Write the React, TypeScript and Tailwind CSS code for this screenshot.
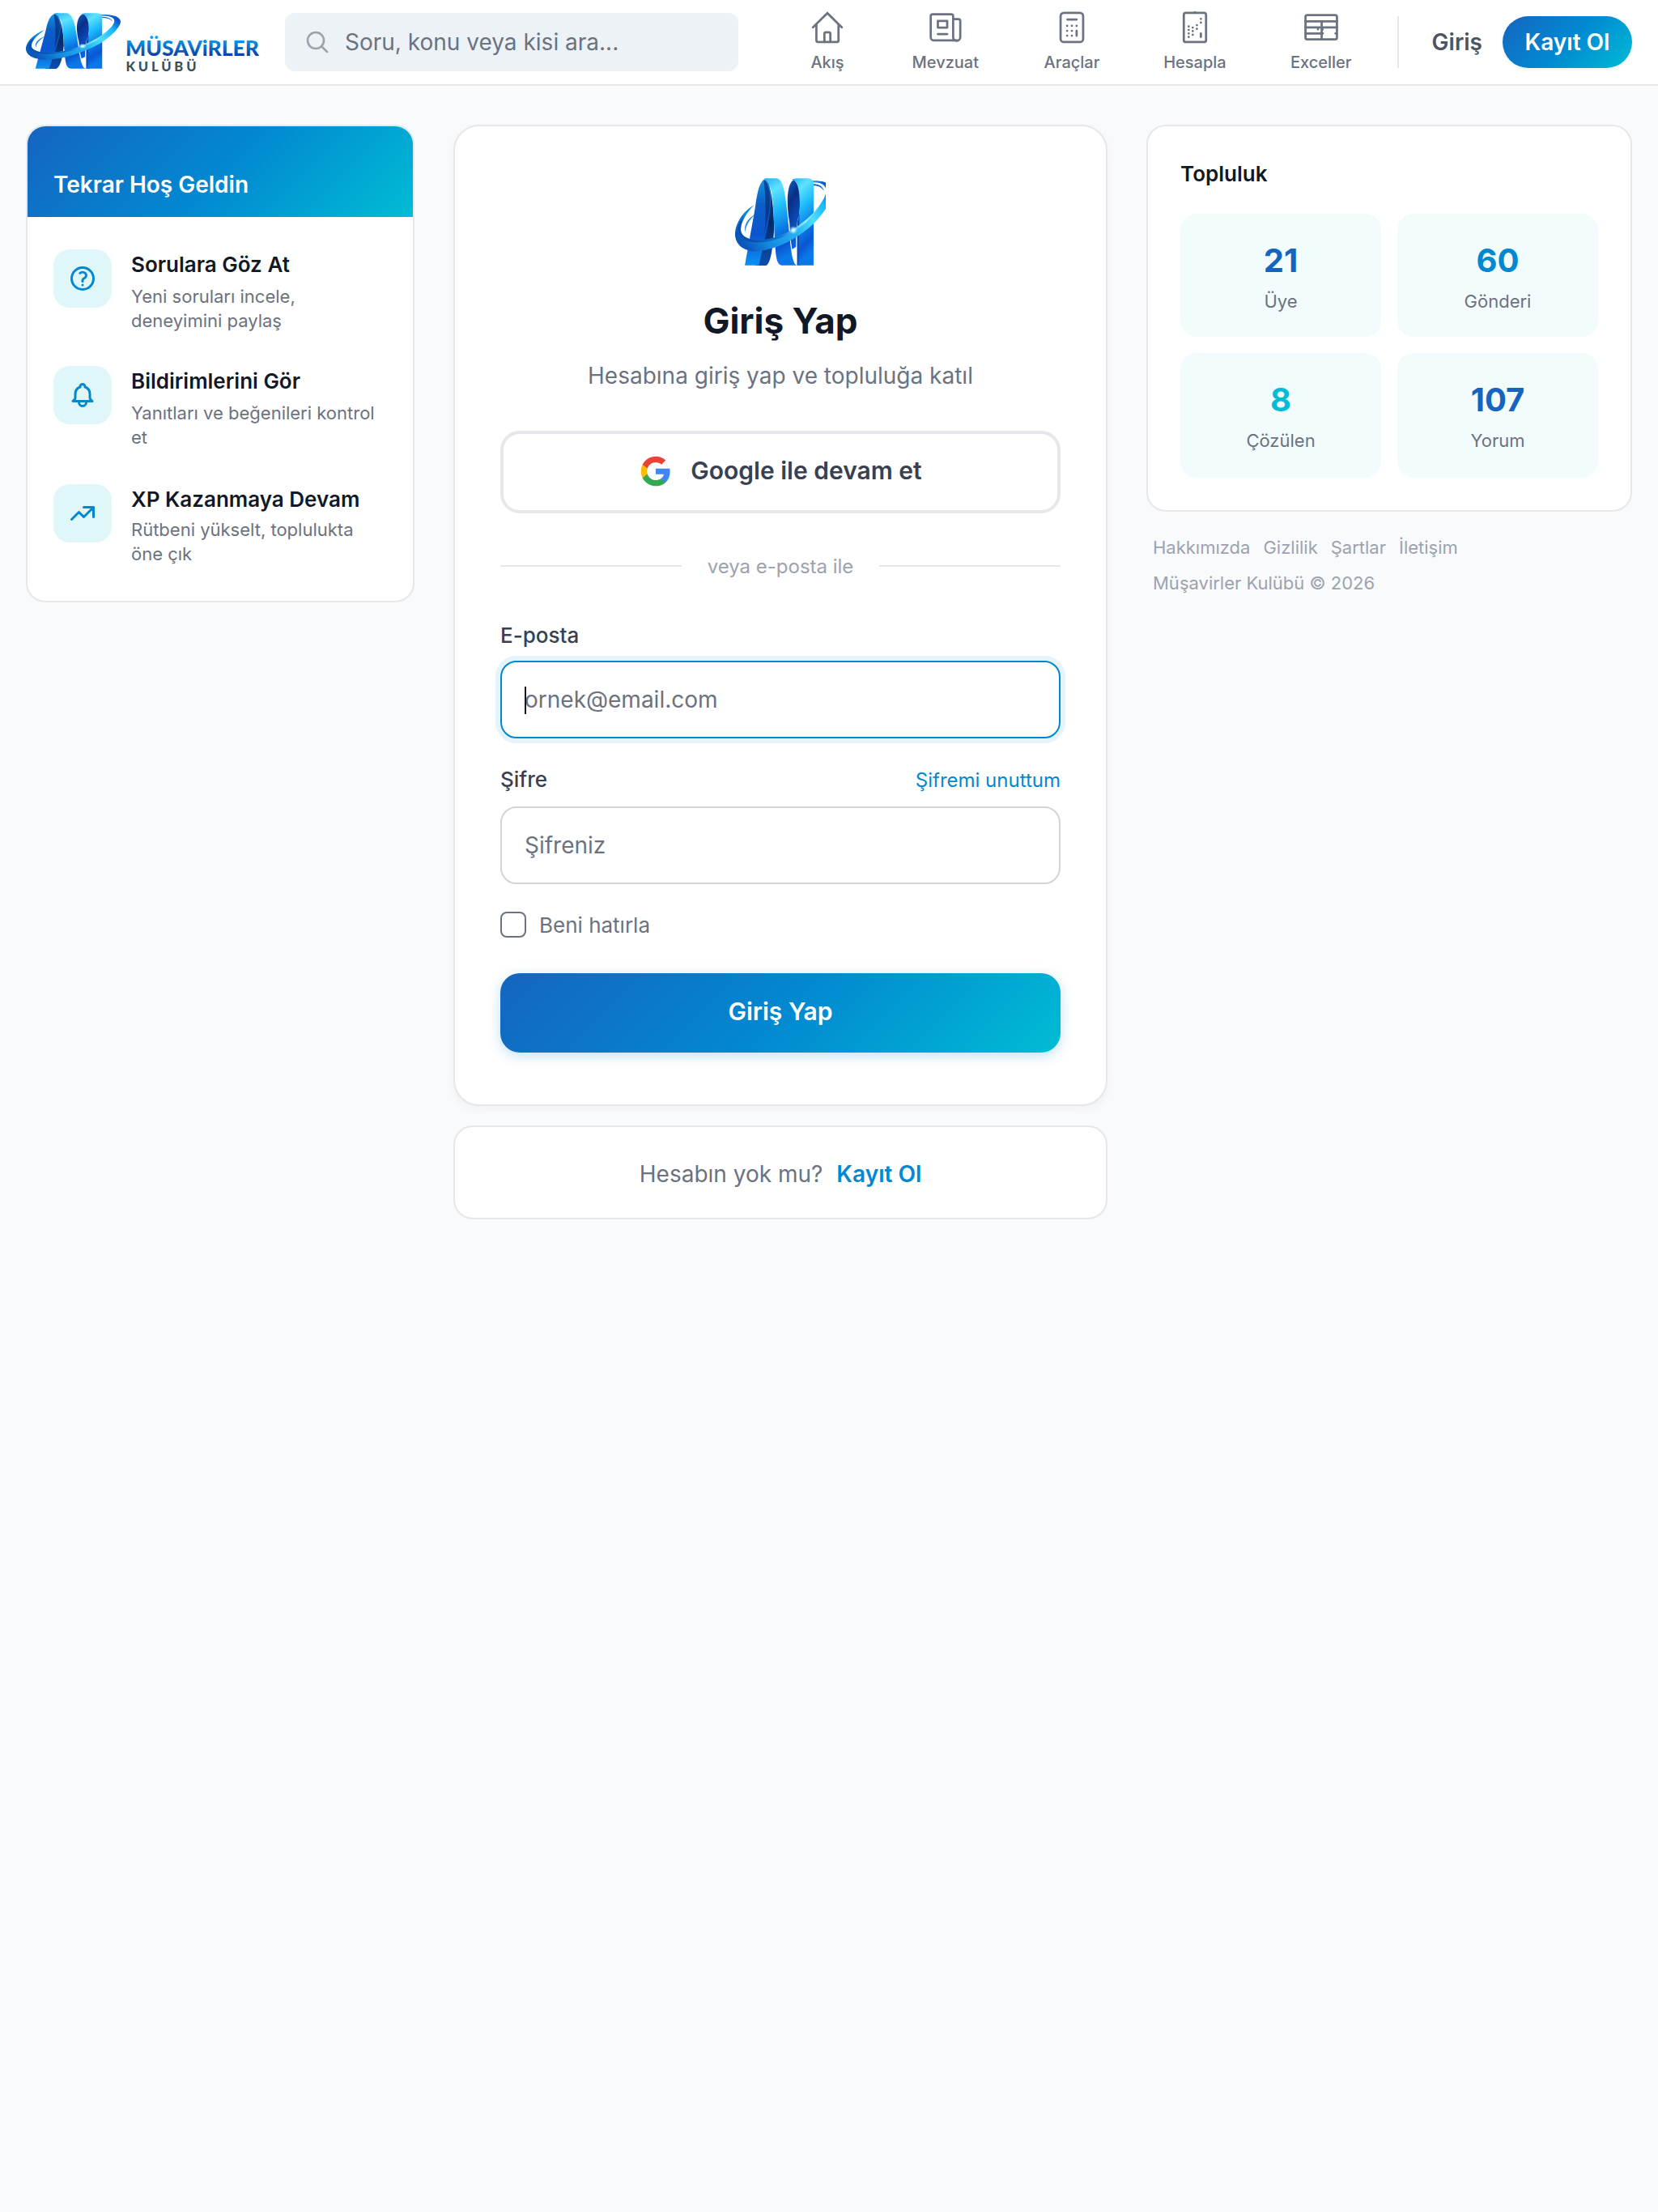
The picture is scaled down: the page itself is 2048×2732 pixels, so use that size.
import type { ReactNode } from 'react';

const NAV = [
  { label: 'Akış', icon: 'home', cell: 'w-[124px]' },
  { label: 'Mevzuat', icon: 'news', cell: 'w-[167.6px]' },
  { label: 'Araçlar', icon: 'calc', cell: 'w-[144.8px]' },
  { label: 'Hesapla', icon: 'sheet', cell: 'w-[159px]' },
  { label: 'Exceller', icon: 'table', cell: 'w-[152.6px]' },
];

const FEATURES = [
  {
    title: 'Sorulara Göz At',
    body: 'Yeni soruları incele, deneyimini paylaş',
    icon: 'question',
    row: 'h-[104px]',
    gap: 'mt-[5px]',
  },
  {
    title: 'Bildirimlerini Gör',
    body: 'Yanıtları ve beğenileri kontrol et',
    icon: 'bell',
    row: 'h-[106px]',
    gap: 'mt-[5px]',
  },
  {
    title: 'XP Kazanmaya Devam',
    body: 'Rütbeni yükselt, toplulukta öne çık',
    icon: 'trend',
    row: 'h-[104px]',
    gap: 'mt-[3px]',
  },
];

const STATS = [
  { value: '21', label: 'Üye', color: 'text-[#1565c0]' },
  { value: '60', label: 'Gönderi', color: 'text-[#0288d1]' },
  { value: '8', label: 'Çözülen', color: 'text-[#00bcd4]' },
  { value: '107', label: 'Yorum', color: 'text-[#1565c0]' },
];

const LINKS = ['Hakkımızda', 'Gizlilik', 'Şartlar', 'İletişim'];

const ICONS: Record<string, ReactNode> = {
  search: (
    <path d="m21 21-5.197-5.197m0 0A7.5 7.5 0 1 0 5.196 5.196a7.5 7.5 0 0 0 10.607 10.607Z" />
  ),
  home: (
    <>
      <path
        strokeLinejoin="miter"
        d="M2.3 11.9 12 2.3l9.7 9.6"
      />
      <path d="M4.6 10v10.6c0 .7.5 1.2 1.1 1.2h12.7c.6 0 1.1-.5 1.1-1.2V10" />
      <path d="M10 21.7v-5.4c0-.7.4-1.1 1-1.1h2c.6 0 1 .4 1 1.1v5.4" />
    </>
  ),
  news: (
    <>
      <path d="M17.1 20.7H4.2A2.2 2.2 0 0 1 2 18.5V4.3C2 3.5 2.6 3 3.3 3h12.5c.7 0 1.3.5 1.3 1.3v14.2a2.2 2.2 0 0 0 4.8 0V7.7c0-.8-.5-1.3-1.2-1.3h-3.6" />
      <path d="M17.1 20.7h2.6" />
      <path d="M6.8 7.5h6.3V12H6.8zM6.8 16.4h6.3" />
    </>
  ),
  calc: (
    <>
      <rect x="4.4" y="2.1" width="15.2" height="19.7" rx="2.2" />
      <path d="M9 6.6h6.2M8.8 10.9h.01M12 10.9h.01M15.2 10.9h.01M8.8 14.2h.01M12 14.2h.01M8.8 17.5h.01M12 17.5h.01M15.2 14.2v3.3" />
    </>
  ),
  sheet: (
    <>
      <rect x="4.5" y="2.1" width="15" height="19.7" rx="1.4" />
      <path d="M12 1.7h.01M7.8 11.3h.01M7.8 13.6h.01M7.8 16h.01M7.8 18.4h.01M10.5 12h.01M10.5 14.4h.01M10.5 16.9h.01M13.3 10.4h.01M13.3 12.9h.01M16 6.2h.01M16 8.7h.01M16 16v2.3" />
    </>
  ),
  table: (
    <>
      <rect x="1.4" y="3.6" width="21.2" height="16.4" rx="1.2" />
      <path d="M1.4 7.8h21.2M1.4 11.9h21.2M1.4 16H12.3M12.3 7.8V20M9.8 13.2h.01M12.9 13.3h.01M13.1 16h.01M21.6 16h.01" />
    </>
  ),
  question: (
    <path d="M9.879 7.519c1.171-1.025 3.071-1.025 4.242 0 1.172 1.025 1.172 2.687 0 3.712-.203.179-.43.326-.67.442-.745.361-1.45.999-1.45 1.827v.75M21 12a9 9 0 1 1-18 0 9 9 0 0 1 18 0Zm-9 5.25h.008v.008H12v-.008Z" />
  ),
  bell: (
    <path d="M15 17h5l-1.405-1.405A2.032 2.032 0 0 1 18 14.158V11a6.002 6.002 0 0 0-4-5.659V5a2 2 0 1 0-4 0v.341C7.67 6.165 6 8.388 6 11v3.159c0 .538-.214 1.055-.595 1.436L4 17h5m6 0v1a3 3 0 1 1-6 0v-1m6 0H9" />
  ),
  trend: <path d="M13 7h8m0 0v8m0-8-8 8-4-4-6 6" />,
};

function Icon({
  name,
  className,
  strokeWidth = 1.5,
}: {
  name: string;
  className: string;
  strokeWidth?: number;
}) {
  return (
    <svg
      viewBox="0 0 24 24"
      fill="none"
      stroke="currentColor"
      strokeWidth={strokeWidth}
      strokeLinecap="round"
      strokeLinejoin="round"
      className={className}
    >
      {ICONS[name]}
    </svg>
  );
}

function LogoMark({
  id,
  viewBox,
  className,
}: {
  id: string;
  viewBox: string;
  className: string;
}) {
  const fill = (name: string) => `url(#${id}-${name})`;
  return (
    <svg viewBox={viewBox} preserveAspectRatio="none" className={className}>
      <defs>
        <linearGradient id={`${id}-leg`} x1="0" y1="0" x2="0" y2="1">
          <stop offset="0" stopColor="#1494e4" />
          <stop offset="0.3" stopColor="#0a5fc4" />
          <stop offset="0.65" stopColor="#0a55d0" />
          <stop offset="1" stopColor="#0a93f2" />
        </linearGradient>
        <linearGradient id={`${id}-back`} x1="0" y1="0" x2="0" y2="1">
          <stop offset="0" stopColor="#0b3f94" />
          <stop offset="0.5" stopColor="#062a66" />
          <stop offset="1" stopColor="#0a4fb0" />
        </linearGradient>
        <linearGradient id={`${id}-front`} x1="0" y1="0" x2="0.25" y2="1">
          <stop offset="0" stopColor="#22b0f2" />
          <stop offset="0.2" stopColor="#5fe2ff" />
          <stop offset="0.42" stopColor="#1fbcfb" />
          <stop offset="0.68" stopColor="#0b78e4" />
          <stop offset="0.86" stopColor="#0a55d2" />
          <stop offset="1" stopColor="#0a78e6" />
        </linearGradient>
        <linearGradient id={`${id}-inner`} x1="0" y1="0" x2="0.3" y2="1">
          <stop offset="0" stopColor="#0b66c8" />
          <stop offset="0.35" stopColor="#0a2f86" />
          <stop offset="1" stopColor="#0b5fe0" />
        </linearGradient>
        <linearGradient id={`${id}-ring`} x1="0" y1="0.7" x2="1" y2="0.2">
          <stop offset="0" stopColor="#0b58bc" />
          <stop offset="0.2" stopColor="#118be0" />
          <stop offset="0.5" stopColor="#25b4f6" />
          <stop offset="0.7" stopColor="#4fdcff" />
          <stop offset="0.88" stopColor="#14b6fb" />
          <stop offset="1" stopColor="#0b56cc" />
        </linearGradient>
        <linearGradient id={`${id}-edge`} x1="0" y1="0.3" x2="1" y2="0">
          <stop offset="0" stopColor="#0b50b0" />
          <stop offset="0.3" stopColor="#1278d2" />
          <stop offset="0.65" stopColor="#8ff0ff" />
          <stop offset="1" stopColor="#2cc4fb" />
        </linearGradient>
        <radialGradient id={`${id}-glow`}>
          <stop offset="0" stopColor="#ffffff" />
          <stop offset="0.35" stopColor="#d8fbff" stopOpacity="0.8" />
          <stop offset="1" stopColor="#8ff0ff" stopOpacity="0" />
        </radialGradient>
      </defs>
      {/* ribbon A */}
      <path
        d="M150 38C168 60 180 130 181 225C176 300 168 350 152 360H112L120 200Z"
        fill={fill('back')}
      />
      <path
        d="M73 359L112 140C120 80 130 36 158 36C164 60 172 100 168 140C160 220 138 300 125 359Z"
        fill={fill('leg')}
      />
      <path
        d="M143 42C160 48 170 90 164 150C158 190 152 210 146 240C152 170 150 100 143 42Z"
        fill="#0a2f7c"
        opacity="0.75"
      />
      <path
        d="M142 38C150 35 175 36 190 36C212 38 220 80 226 130C236 210 240 300 252 340C256 354 260 359 268 359H210C194 356 190 340 187 310C180 240 182 150 172 90C166 58 156 42 142 38Z"
        fill={fill('front')}
      />
      {/* ribbon I */}
      <path
        d="M238 200C226 130 226 44 262 37C276 50 280 90 277 130L274 175C264 190 262 230 262 290L248 300C242 270 240 230 238 200Z"
        fill={fill('inner')}
      />
      <path d="M266 200L280 150V359H266Z" fill="#0a4cb4" />
      <path
        d="M247 40C255 35 275 36 300 36C318 36 327 40 327 60V359H271L276 130C276 80 268 44 247 40Z"
        fill={fill('front')}
      />
      {/* orbit */}
      <path
        d="M112 168C84 186 68 208 75 236C76 210 90 190 112 168Z"
        fill="#1583dc"
      />
      <path
        d="M327 57C350 58 362 68 366 84C358 70 345 63 327 63Z"
        fill="#0d63cc"
      />
      <path
        d="M107 135C70 155 37 200 37 247C40 290 80 308 115 307C200 303 300 240 345 185C375 150 397 110 397 85C395 55 365 43 322 45L327 51C360 51 378 64 372 92C364 125 320 180 262 218C220 246 170 266 120 266C80 264 55 248 58 222C62 190 85 158 107 135Z"
        fill={fill('ring')}
      />
      <path
        d="M58 222C55 248 80 264 120 266C170 266 220 246 262 218C310 185 350 145 366 108C350 150 310 196 262 228C215 257 160 276 110 274C70 271 42 254 48 215C52 200 60 190 68 180C62 195 58 208 58 222Z"
        fill={fill('edge')}
      />
      <circle cx="252" cy="228" r="16" fill={fill('glow')} />
    </svg>
  );
}

function GoogleIcon() {
  return (
    <svg viewBox="0 0 24 24" className="size-10">
      <path
        fill="#4285F4"
        d="M22.56 12.25c0-.78-.07-1.53-.2-2.25H12v4.26h5.92c-.26 1.37-1.04 2.53-2.21 3.31v2.77h3.57c2.08-1.92 3.28-4.74 3.28-8.09z"
      />
      <path
        fill="#34A853"
        d="M12 23c2.97 0 5.46-.98 7.28-2.66l-3.57-2.77c-.98.66-2.23 1.06-3.71 1.06-2.86 0-5.29-1.93-6.16-4.53H2.18v2.84C3.99 20.53 7.7 23 12 23z"
      />
      <path
        fill="#FBBC05"
        d="M5.84 14.09c-.22-.66-.35-1.36-.35-2.09s.13-1.43.35-2.09V7.07H2.18C1.43 8.55 1 10.22 1 12s.43 3.45 1.18 4.93l2.85-2.22.81-.62z"
      />
      <path
        fill="#EA4335"
        d="M12 5.38c1.62 0 3.06.56 4.21 1.64l3.15-3.15C17.45 2.09 14.97 1 12 1 7.7 1 3.99 3.47 2.18 7.07l3.66 2.84c.87-2.6 3.3-4.53 6.16-4.53z"
      />
    </svg>
  );
}

function Header() {
  return (
    <header className="flex h-[106px] items-start border-b-2 border-[#e5e7eb] bg-white px-8">
      <a className="flex w-[320px] pt-4">
        <LogoMark
          id="brand"
          viewBox="37 35 360 325"
          className="h-[69px] w-[117px] shrink-0"
        />
        <svg viewBox="0 0 180 80" className="ml-1.5 h-20 w-[180px] shrink-0">
          <defs>
            <linearGradient
              id="word"
              gradientUnits="userSpaceOnUse"
              x1="0"
              y1="32"
              x2="0"
              y2="54"
            >
              <stop offset="0" stopColor="#0a9cf0" />
              <stop offset="1" stopColor="#0a3c9c" />
            </linearGradient>
          </defs>
          <text
            x="0"
            y="53"
            fill="url(#word)"
            textLength="165"
            className="font-['Lato'] text-[26.5px] font-black"
          >
            MÜSAViRLER
          </text>
          <text
            x="0.5"
            y="71.5"
            fill="#37505e"
            textLength="87"
            className="font-['Lato'] text-[16.5px] font-black"
          >
            KULÜBÜ
          </text>
        </svg>
      </a>

      <div className="mt-4 flex h-[72px] w-[560px] items-center gap-[18px] rounded-xl bg-[#edf2f7] px-6">
        <Icon name="search" strokeWidth={2} className="size-8 text-[#9ca3af]" />
        <span className="text-[28px] text-[#6b7280]">
          Soru, konu veya kisi ara...
        </span>
      </div>

      <nav className="ml-[48px] flex">
        {NAV.map((item) => (
          <a
            key={item.label}
            className={`${item.cell} flex flex-col items-center pt-3 text-[#6b7280]`}
          >
            <Icon name={item.icon} className="size-11" />
            <span className="mt-[7px] text-[20px] leading-7 font-medium">
              {item.label}
            </span>
          </a>
        ))}
      </nav>

      <div className="mt-5 ml-auto flex h-16 items-center">
        <div className="h-16 w-0.5 bg-[#e5e7eb]" />
        <a className="ml-[41px] text-[28px] font-semibold text-[#4b5563]">
          Giriş
        </a>
        <a className="ml-[25px] flex h-16 w-40 items-center justify-center rounded-full bg-[linear-gradient(135deg,#1565c0_0%,#0288d1_50%,#00bcd4_100%)] text-[28px] font-semibold text-white shadow-[0_2px_4px_rgba(0,0,0,0.06)]">
          Kayıt Ol
        </a>
      </div>
    </header>
  );
}

function WelcomeCard() {
  return (
    <aside className="w-[480px] overflow-hidden rounded-3xl border-2 border-[#e5e7eb] bg-white">
      <div className="flex h-28 items-end bg-[linear-gradient(135deg,#1565c0_0%,#0288d1_50%,#00bcd4_100%)] px-8 pb-5">
        <h2 className="text-[28px] leading-[40px] font-semibold text-white">
          Tekrar Hoş Geldin
        </h2>
      </div>
      <div className="flex flex-col gap-10 px-8 py-10">
        {FEATURES.map((f) => (
          <div key={f.title} className={`${f.row} flex gap-6`}>
            <div className="flex size-[72px] shrink-0 items-center justify-center rounded-[20px] bg-[#e0f7fa]">
              <Icon
                name={f.icon}
                strokeWidth={2}
                className="size-9 text-[#0288d1]"
              />
            </div>
            <div>
              <h3 className="text-[26px] leading-[38px] font-semibold text-[#111827]">
                {f.title}
              </h3>
              <p className={`${f.gap} text-[22px] leading-[30px] text-[#6b7280]`}>
                {f.body}
              </p>
            </div>
          </div>
        ))}
      </div>
    </aside>
  );
}

function LoginCard() {
  return (
    <div className="h-[1212px] rounded-[32px] border-2 border-[#e5e7eb] bg-white px-14 pt-16 shadow-[0_4px_12px_rgba(0,0,0,0.04)]">
      <div className="flex h-28 justify-center">
        <LogoMark
          id="hero"
          viewBox="37 35 335 325"
          className="h-[108px] w-28"
        />
      </div>
      <h1 className="mt-9 text-center text-[44px] leading-[56px] font-bold text-[#111827]">
        Giriş Yap
      </h1>
      <p className="mt-[19px] text-center text-[28px] leading-[42px] text-[#6b7280]">
        Hesabına giriş yap ve topluluğa katıl
      </p>

      <button className="mt-[47px] flex h-[102px] w-full items-center justify-center gap-[23px] rounded-3xl border-4 border-[#e5e7eb] bg-white pb-[3px] pl-px text-[30px] font-semibold text-[#374151]">
        <GoogleIcon />
        Google ile devam et
      </button>

      <div className="mt-[47px] flex h-9 items-center gap-8">
        <div className="h-0.5 flex-1 bg-[#e5e7eb]" />
        <span className="pt-0.5 text-[24px] leading-9 text-[#9ca3af]">
          veya e-posta ile
        </span>
        <div className="h-0.5 flex-1 bg-[#e5e7eb]" />
      </div>

      <label className="mt-12 block text-[26px] leading-10 font-medium text-[#374151]">
        E-posta
      </label>
      <div className="relative mt-[11px]">
        <input
          type="email"
          placeholder="ornek@email.com"
          className="block h-24 w-full rounded-[20px] border-2 border-[#0288d1] bg-white px-7 text-[28px] shadow-[0_0_0_6px_rgba(2,136,209,0.1)] outline-none placeholder:text-[#6b7280]"
        />
        {/* caret */}
        <span className="absolute top-8 left-[30px] h-[34px] w-0.5 bg-[#111827]" />
      </div>

      <div className="mt-[31px] flex h-10 items-baseline justify-between leading-10">
        <label className="text-[26px] font-medium text-[#374151]">Şifre</label>
        <a className="text-[24px] text-[#0288d1]">Şifremi unuttum</a>
      </div>
      <input
        type="password"
        placeholder="Şifreniz"
        className="mt-[13px] block h-24 w-full rounded-[20px] border-2 border-[#d1d5db] bg-white px-7 text-[28px] outline-none placeholder:text-[#6b7280]"
      />

      <label className="mt-[34px] flex h-8 items-center gap-4 text-[26px] text-[#6b7280]">
        <span className="size-8 rounded-lg border-2 border-[#6b7280] bg-white" />
        <span className="pt-0.5 leading-8">Beni hatırla</span>
      </label>

      <button className="mt-11 flex h-[98px] w-full items-center justify-center rounded-3xl bg-[linear-gradient(135deg,#1565c0_0%,#0288d1_50%,#00bcd4_100%)] pb-[3px] text-[30px] font-semibold text-white shadow-[0_4px_16px_rgba(2,136,209,0.25)]">
        Giriş Yap
      </button>
    </div>
  );
}

function Community() {
  return (
    <aside className="w-[600px]">
      <div className="rounded-3xl border-2 border-[#e5e7eb] bg-white px-10 pt-[39px] pb-10">
        <h2 className="text-[26px] leading-[39px] font-semibold text-[#111827]">
          Topluluk
        </h2>
        <div className="mt-[30px] grid grid-cols-2 grid-rows-[152px_154px] gap-5">
          {STATS.map((s) => (
            <div
              key={s.label}
              className="flex flex-col items-center rounded-[20px] bg-[#f3fcfd] pt-[34px]"
            >
              <span className={`${s.color} text-[40px] leading-[48px] font-bold`}>
                {s.value}
              </span>
              <span className="mt-2.5 text-[22px] leading-[33px] text-[#6b7280]">
                {s.label}
              </span>
            </div>
          ))}
        </div>
      </div>
      <div className="mt-7 px-2 text-[22px] leading-[33px] text-[#9ca3af]">
        <div className="flex gap-4">
          {LINKS.map((l) => (
            <a key={l}>{l}</a>
          ))}
        </div>
        <p className="mt-[11px]">Müşavirler Kulübü © 2026</p>
      </div>
    </aside>
  );
}

export default function App() {
  return (
    <div className="min-h-[2732px] w-[2048px] bg-[#f9fafc] font-['Inter',sans-serif]">
      <Header />
      <main className="flex items-start gap-12 px-8 pt-12">
        <WelcomeCard />
        <section className="w-[808px]">
          <LoginCard />
          <div className="mt-6 flex h-[116px] items-center justify-center gap-[17px] rounded-3xl border-2 border-[#e5e7eb] bg-white pt-1 text-[28px] text-[#6b7280]">
            Hesabın yok mu?
            <a className="font-semibold text-[#0288d1]">Kayıt Ol</a>
          </div>
        </section>
        <Community />
      </main>
    </div>
  );
}
